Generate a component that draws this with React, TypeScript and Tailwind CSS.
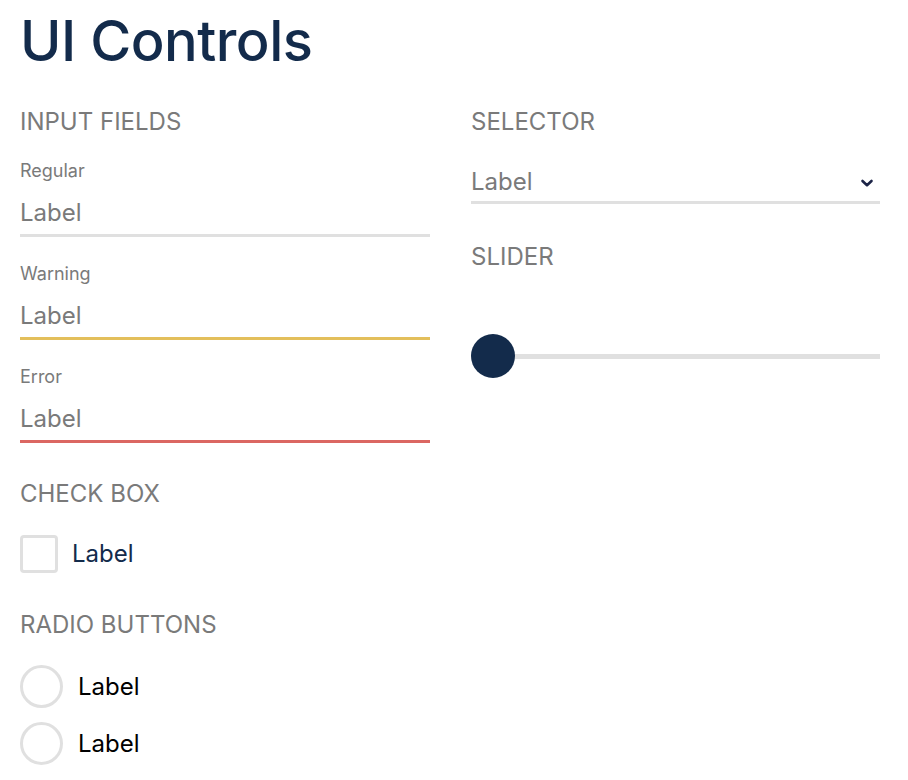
import React from "react";

function Field({ label, color }: { label: string; color: string }) {
  return (
    <div className="flex flex-col">
      <div className="h-[24px] text-[18px] leading-[24px] text-[#7a7a7a]">{label}</div>
      <div className={`mt-[14px] h-[40px] pb-[5px] border-b-[3px] ${color}`}>
        <div className="text-[24px] leading-[32px] text-[#7a7a7a]">Label</div>
      </div>
    </div>
  );
}

function Header({ children }: { children: React.ReactNode }) {
  return <div className="h-[32px] text-[24px] leading-[32px] text-[#7a7a7a]">{children}</div>;
}

function Radio() {
  return (
    <div className="flex items-center">
      <div className="w-[43px] h-[43px] rounded-full border-[3px] border-[#e0e0e0] bg-white" />
      <span className="ml-[15px] text-[24px] leading-[32px] text-black">Label</span>
    </div>
  );
}

export default function App() {
  return (
    <div className="font-['Inter',sans-serif] bg-white w-[908px] h-[780px] pl-5 pt-[13px] overflow-hidden">
      <h1 className="h-[56px] text-[56px] leading-[56px] font-medium tracking-[-0.5px] text-[#132b4b]">UI Controls</h1>
      <div className="mt-[37px] flex gap-[41px]">
        {/* left column */}
        <div className="w-[410px] flex flex-col">
          <Header>INPUT FIELDS</Header>
          <div className="mt-[21px] flex flex-col gap-[25px]">
            <Field label="Regular" color="border-[#e0e0e0]" />
            <Field label="Warning" color="border-[#e3bf5b]" />
            <Field label="Error" color="border-[#db6762]" />
          </div>
          <div className="mt-[35px]">
            <Header>CHECK BOX</Header>
          </div>
          <div className="mt-[25px] flex items-center">
            <div className="w-[38px] h-[38px] rounded-[4px] border-[3px] border-[#e0e0e0] bg-white" />
            <span className="ml-[14px] text-[24px] leading-[32px] text-[#132b4b]">Label</span>
          </div>
          <div className="mt-[36px]">
            <Header>RADIO BUTTONS</Header>
          </div>
          <div className="mt-[24px] flex flex-col gap-[14px]">
            <Radio />
            <Radio />
          </div>
        </div>
        {/* right column */}
        <div className="w-[409px] flex flex-col">
          <Header>SELECTOR</Header>
          <div className="mt-[28px] flex items-center justify-between pb-[3px] border-b-[3px] border-[#e0e0e0]">
            <span className="text-[24px] leading-[32px] text-[#7a7a7a]">Label</span>
            <svg width="14" height="10" viewBox="0 0 14 10" className="mr-[6px] mt-[2px]">
              <path d="M2.5 3 L7 7.2 L11.5 3" fill="none" stroke="#1c2447" strokeWidth="2.6" strokeLinecap="round" strokeLinejoin="round" />
            </svg>
          </div>
          <div className="mt-[37px]">
            <Header>SLIDER</Header>
          </div>
          <div className="mt-[61px] relative h-[44px] flex items-center">
            <div className="w-full h-[5px] bg-[#e0e0e0]" />
            <div className="absolute left-0 top-0 w-[44px] h-[44px] rounded-full bg-[#132b4b]" />
          </div>
        </div>
      </div>
    </div>
  );
}
